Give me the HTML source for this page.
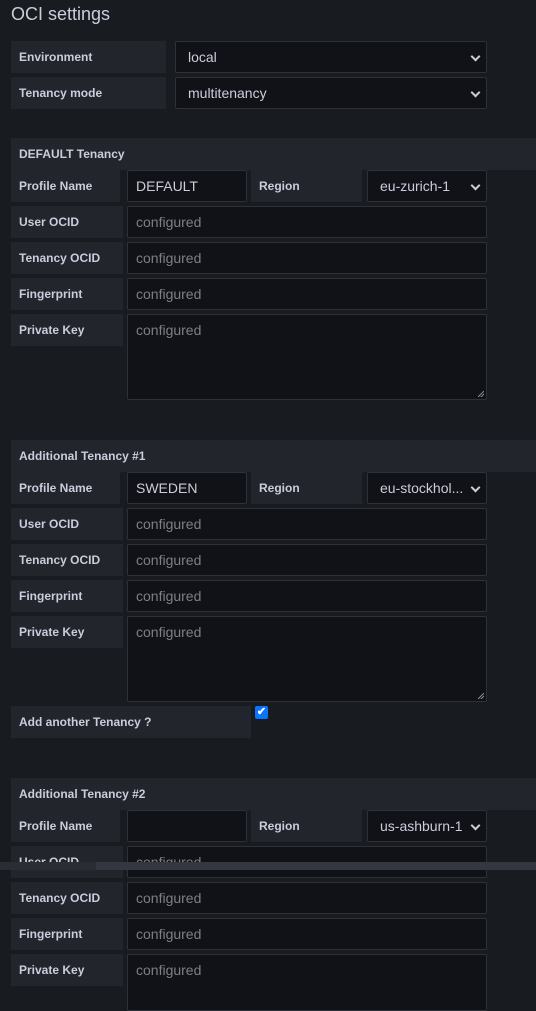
<!DOCTYPE html><html style="width:536px;height:1011px;overflow:hidden"><head><style>
*{box-sizing:border-box;margin:0;padding:0}
body{width:536px;height:1011px;background:#181b1f;font-family:"Liberation Sans",sans-serif;color:#ccccdc;position:relative;overflow:hidden}
.a{position:absolute}
.l{position:absolute;background:#22252b;font-size:12px;font-weight:bold;color:#ccccdc;padding-left:8px;display:flex;align-items:center;height:32px}
.i{position:absolute;background:#111217;border:1px solid #2e3138;border-radius:2px;height:32px;font-size:14px;padding-left:8px;display:flex;align-items:center;color:#ccccdc}
.p{color:#7d7f88}
.s::after{content:"";position:absolute;right:7px;top:11px;width:5px;height:5px;border-right:2px solid #ccccdc;border-bottom:2px solid #ccccdc;transform:rotate(45deg)}
.h{position:absolute;left:11px;right:0;height:32px;background:#22252b;font-size:12px;font-weight:bold;padding-left:8px;display:flex;align-items:center}
.ta{align-items:flex-start;padding-top:7px}
.rz{position:absolute;right:2px;bottom:2px;width:6px;height:6px;background:linear-gradient(135deg,transparent 45%,#888 45%,#888 55%,transparent 55%,transparent 70%,#888 70%,#888 80%,transparent 80%)}
</style></head><body>
<div class="a" style="left:11px;top:4px;font-size:18px">OCI settings</div>
<div class="l" style="left:11px;top:41px;width:155px">Environment</div>
<div class="i s" style="left:175px;top:41px;width:312px;padding-left:12px">local</div>
<div class="l" style="left:11px;top:77px;width:155px">Tenancy mode</div>
<div class="i s" style="left:175px;top:77px;width:312px;padding-left:12px">multitenancy</div>

<div class="h" style="top:138px">DEFAULT Tenancy</div>
<div class="l" style="left:11px;top:170px;width:109px">Profile Name</div>
<div class="i" style="left:127px;top:170px;width:120px">DEFAULT</div>
<div class="l" style="left:251px;top:170px;width:111px">Region</div>
<div class="i s" style="left:367px;top:170px;width:120px;padding-left:12px">eu-zurich-1</div>
<div class="l" style="left:11px;top:206px;width:112px">User OCID</div>
<div class="i p" style="left:127px;top:206px;width:360px">configured</div>
<div class="l" style="left:11px;top:242px;width:112px">Tenancy OCID</div>
<div class="i p" style="left:127px;top:242px;width:360px">configured</div>
<div class="l" style="left:11px;top:278px;width:112px">Fingerprint</div>
<div class="i p" style="left:127px;top:278px;width:360px">configured</div>
<div class="l" style="left:11px;top:314px;width:112px">Private Key</div>
<div class="i p ta" style="left:127px;top:314px;width:360px;height:86px">configured<div class="rz"></div></div>

<div class="h" style="top:440px">Additional Tenancy #1</div>
<div class="l" style="left:11px;top:472px;width:109px">Profile Name</div>
<div class="i" style="left:127px;top:472px;width:120px">SWEDEN</div>
<div class="l" style="left:251px;top:472px;width:111px">Region</div>
<div class="i s" style="left:367px;top:472px;width:120px;padding-left:12px">eu-stockhol...</div>
<div class="l" style="left:11px;top:508px;width:112px">User OCID</div>
<div class="i p" style="left:127px;top:508px;width:360px">configured</div>
<div class="l" style="left:11px;top:544px;width:112px">Tenancy OCID</div>
<div class="i p" style="left:127px;top:544px;width:360px">configured</div>
<div class="l" style="left:11px;top:580px;width:112px">Fingerprint</div>
<div class="i p" style="left:127px;top:580px;width:360px">configured</div>
<div class="l" style="left:11px;top:616px;width:112px">Private Key</div>
<div class="i p ta" style="left:127px;top:616px;width:360px;height:86px">configured<div class="rz"></div></div>
<div class="l" style="left:11px;top:706px;width:240px">Add another Tenancy ?</div>
<div class="a" style="left:255px;top:706px;width:13px;height:13px;background:#0b74ff;border-radius:2px;color:#fff;font-size:11px;font-weight:bold;line-height:13px;text-align:center">✔</div>

<div class="h" style="top:778px">Additional Tenancy #2</div>
<div class="l" style="left:11px;top:810px;width:109px">Profile Name</div>
<div class="i" style="left:127px;top:810px;width:120px"></div>
<div class="l" style="left:251px;top:810px;width:111px">Region</div>
<div class="i s" style="left:367px;top:810px;width:120px;padding-left:12px">us-ashburn-1</div>
<div class="l" style="left:11px;top:846px;width:112px">User OCID</div>
<div class="i p" style="left:127px;top:846px;width:360px">configured</div>
<div class="a" style="left:0;top:862px;width:96px;height:8px;background:#2a2d33"></div>
<div class="a" style="left:96px;top:862px;width:440px;height:8px;background:#34373f"></div>
<div class="l" style="left:11px;top:882px;width:112px">Tenancy OCID</div>
<div class="i p" style="left:127px;top:882px;width:360px">configured</div>
<div class="l" style="left:11px;top:918px;width:112px">Fingerprint</div>
<div class="i p" style="left:127px;top:918px;width:360px">configured</div>
<div class="l" style="left:11px;top:954px;width:112px">Private Key</div>
<div class="i p ta" style="left:127px;top:954px;width:360px;height:57px">configured</div>
</body></html>
